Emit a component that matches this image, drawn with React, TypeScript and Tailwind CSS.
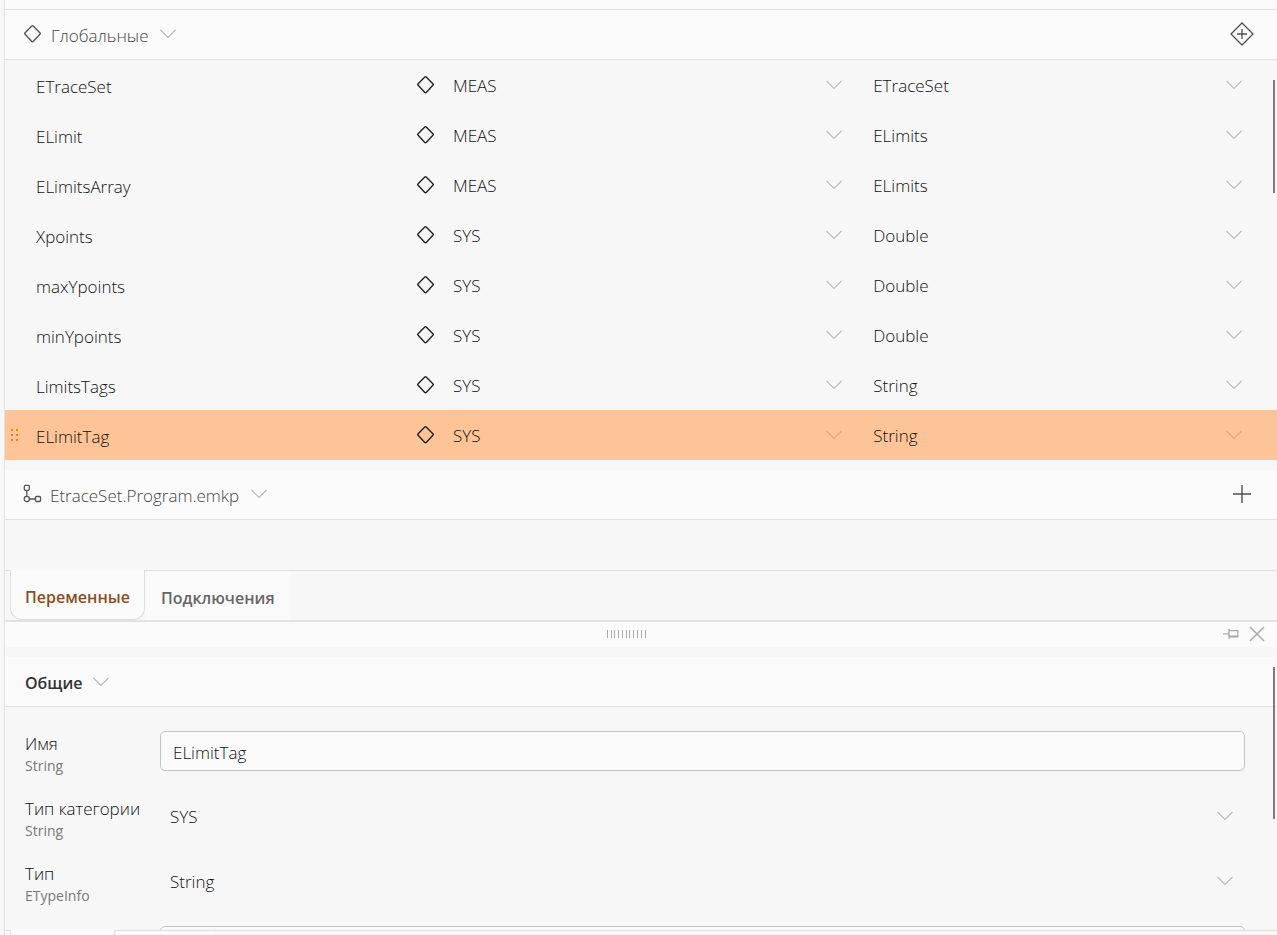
import React, { useState } from "react";

interface Variable {
  name: string;
  category: string;
  type: string;
}

const variables: Variable[] = [
  { name: "ETraceSet", category: "MEAS", type: "ETraceSet" },
  { name: "ELimit", category: "MEAS", type: "ELimits" },
  { name: "ELimitsArray", category: "MEAS", type: "ELimits" },
  { name: "Xpoints", category: "SYS", type: "Double" },
  { name: "maxYpoints", category: "SYS", type: "Double" },
  { name: "minYpoints", category: "SYS", type: "Double" },
  { name: "LimitsTags", category: "SYS", type: "String" },
  { name: "ELimitTag", category: "SYS", type: "String" },
];

const categories = ["MEAS", "SYS"];
const types = ["ETraceSet", "ELimits", "Double", "String"];

function Chevron({ className = "" }: { className?: string }) {
  return (
    <svg
      width="16"
      height="10"
      viewBox="0 0 16 10"
      fill="none"
      stroke="currentColor"
      className={`shrink-0 ${className}`}
    >
      <path d="M0.5 1L8 8.5L15.5 1" strokeWidth="1.2" />
    </svg>
  );
}

function Diamond({ className = "" }: { className?: string }) {
  return (
    <svg
      width="20"
      height="20"
      viewBox="0 0 20 20"
      fill="none"
      stroke="currentColor"
      strokeWidth="1.4"
      strokeLinejoin="round"
      className={`shrink-0 ${className}`}
    >
      <path d="M8.8 2L1.9 8.9Q1.3 9.5 1.9 10.1L8.8 17.5Q9.5 18.1 10.2 17.5L17.1 10.1Q17.7 9.5 17.1 8.9L10.2 2Q9.5 1.4 8.8 2Z" />
    </svg>
  );
}

function AddDiamond() {
  return (
    <svg width="24" height="24" viewBox="0 0 24 24" fill="none" stroke="currentColor" strokeWidth="1.3">
      <path d="M12 1L23 12L12 23L1 12Z" />
      <path d="M12 7V17M7 12H17" />
    </svg>
  );
}

function ProgramIcon() {
  return (
    <svg width="20" height="20" viewBox="0 0 20 20" fill="none" stroke="currentColor" strokeWidth="1.3" className="shrink-0">
      <rect x="2.3" y="1.3" width="5" height="5" rx="1" />
      <path d="M4.8 6.3V12.5M7.5 15H13.5" />
      <circle cx="4.8" cy="15" r="2.6" />
      <rect x="13.5" y="12.5" width="5" height="5" rx="1" />
    </svg>
  );
}

function PinIcon() {
  return (
    <svg width="16" height="10" viewBox="0 0 16 10" fill="none" stroke="currentColor">
      <path d="M0 5H6" strokeWidth="1.2" />
      <path d="M6 0V10" strokeWidth="1.4" />
      <path d="M6 1.7H14.8V7" strokeWidth="1.2" />
      <path d="M6 7.5H15.4" strokeWidth="2.2" />
    </svg>
  );
}

function Grip() {
  return (
    <svg width="40" height="8" viewBox="0 0 40 8" stroke="#a8a8a8" shapeRendering="crispEdges">
      <path d="M0.5 0V8M4.5 0V8M7.5 0V8M11.5 0V8M15.5 0V8M19.5 0V8M22.5 0V8M26.5 0V8M30.5 0V8M34.5 0V8M38.5 0V8" />
    </svg>
  );
}

function DragDots() {
  return (
    <svg width="8" height="18" viewBox="0 0 8 18" fill="#f08010">
      {[1, 6, 11].map((y) => (
        <React.Fragment key={y}>
          <rect x="1" y={y} width="2" height="2" />
          <rect x="6" y={y} width="2" height="2" />
        </React.Fragment>
      ))}
    </svg>
  );
}

type SelectProps = {
  label?: string;
  id?: string;
  value: string;
  options: string[];
  className?: string;
  chevronClass?: string;
};

function Select({ label, id, value, options, className = "", chevronClass = "text-[#bcbcbc]" }: SelectProps) {
  return (
    <div className="grid flex-1 items-center">
      <select
        id={id}
        aria-label={label}
        defaultValue={value}
        className={`col-start-1 row-start-1 h-10 w-full appearance-none bg-transparent pt-[2px] outline-none ${className}`}
      >
        {options.map((option) => (
          <option key={option}>{option}</option>
        ))}
      </select>
      <Chevron
        className={`pointer-events-none col-start-1 row-start-1 mr-3 justify-self-end ${chevronClass}`}
      />
    </div>
  );
}

type FieldProps = {
  id: string;
  title: string;
  hint: string;
  children: React.ReactNode;
};

function Field({ id, title, hint, children }: FieldProps) {
  return (
    <div className="flex h-[65px] items-start">
      <label htmlFor={id} className="w-[135px] shrink-0 pt-px">
        <span className="block leading-6">{title}</span>
        <span className="block text-sm leading-5 font-normal text-[#777]">{hint}</span>
      </label>
      {children}
    </div>
  );
}

function App() {
  const [selected, setSelected] = useState("ELimitTag");

  return (
    <div className="h-screen overflow-hidden bg-[#f7f7f7] pl-1 font-['Open_Sans','Noto_Sans',sans-serif] text-[17px] font-light text-[#111]">
      <div className="flex h-full flex-col border-l border-[#e2e2e2]">
        <div className="h-[9px] shrink-0 bg-[#fafafa]"></div>

        <header className="flex h-[51px] shrink-0 items-center justify-between border-y border-[#e0e0e0] bg-[#fbfbfb] pr-[23px] pb-px pl-[18px] text-[#555]">
          <button className="flex items-center gap-2">
            <Diamond />
            <span className="pt-[3px] text-[#444]">Глобальные</span>
            <Chevron className="ml-1 text-[#b8b8b8]" />
          </button>
          <button aria-label="Добавить переменную" className="text-[#505050]">
            <AddDiamond />
          </button>
        </header>

        <section className="relative shrink-0">
          <table className="w-full table-fixed border-collapse">
            <colgroup>
              <col className="w-[32%]" />
              <col className="w-[35%]" />
              <col />
            </colgroup>
            <tbody>
              {variables.map(({ name, category, type }) => {
                const active = name === selected;
                const chevronClass = active ? "text-[#d9a988]" : "text-[#bcbcbc]";
                return (
                  <tr
                    key={name}
                    onClick={() => setSelected(name)}
                    className={active ? "bg-[#fdc497]" : ""}
                  >
                    <td className="h-[50px] p-0">
                      <div className="flex items-center pt-1">
                        <span className="w-[31px] pl-[5px]">{active && <DragDots />}</span>
                        <span>{name}</span>
                      </div>
                    </td>
                    <td className="h-[50px] p-0 pr-[3px]">
                      <div className="flex items-center gap-2 pl-1">
                        <Diamond className="text-[#222]" />
                        <Select
                          label={`Категория ${name}`}
                          value={category}
                          options={categories}
                          className="pl-[9px]"
                          chevronClass={chevronClass}
                        />
                      </div>
                    </td>
                    <td className="h-[50px] p-0 pr-[23px]">
                      <Select
                        label={`Тип ${name}`}
                        value={type}
                        options={types}
                        className="pl-4"
                        chevronClass={chevronClass}
                      />
                    </td>
                  </tr>
                );
              })}
            </tbody>
          </table>
          <div className="absolute top-5 right-[2px] h-[113px] w-[2px] bg-[#7c7c7c]"></div>
        </section>

        <header className="mt-[10px] flex h-[50px] shrink-0 items-center justify-between border-b border-[#e0e0e0] bg-[#fbfbfb] pr-[25px] pb-px pl-[17px] text-[#555]">
          <button className="flex items-center gap-2">
            <ProgramIcon />
            <span className="pt-[3px] text-[#444]">EtraceSet.Program.emkp</span>
            <Chevron className="ml-1 text-[#b8b8b8]" />
          </button>
          <button aria-label="Добавить" className="text-[#505050]">
            <svg width="20" height="20" viewBox="0 0 20 20" stroke="currentColor" strokeWidth="1.4">
              <path d="M10 1V19M1 10H19" />
            </svg>
          </button>
        </header>

        <nav className="mt-[50px] flex h-[52px] shrink-0 border-t border-b-2 border-t-[#dedede] border-b-[#e2e2e2] pl-[5px] text-base font-semibold">
          <button className="-mt-px h-[50px] rounded-b-xl border-x border-b border-[#dedede] bg-[#fbfbfb] px-[14px] pt-1 text-[#8a4f1d]">
            Переменные
          </button>
          <button className="bg-[#fafafa] px-4 pt-1 text-[#666]">Подключения</button>
        </nav>

        <div className="flex h-[25px] shrink-0 items-center bg-[#fbfbfb] pr-3 pb-px pl-[26px]">
          <div className="flex flex-1 justify-center">
            <Grip />
          </div>
          <div className="flex items-center gap-[10px] text-[#aaa]">
            <button aria-label="Закрепить">
              <PinIcon />
            </button>
            <button aria-label="Закрыть">
              <svg width="16" height="16" viewBox="0 0 16 16" stroke="currentColor" strokeWidth="1.5">
                <path d="M1 1L15 15M15 1L1 15" />
              </svg>
            </button>
          </div>
        </div>

        <section className="relative mt-[10px] min-h-0 flex-1 overflow-hidden">
          <header className="flex h-[50px] items-center border-b border-[#e0e0e0] bg-[#fafafa] pl-5">
            <button className="flex items-center gap-[11px] text-base font-semibold text-[#333]">
              <span className="pt-[2px]">Общие</span>
              <Chevron className="text-[#b8b8b8]" />
            </button>
          </header>
          <div className="pt-6 pr-8 pl-5">
            <Field id="name" title="Имя" hint="String">
              <input
                id="name"
                defaultValue="ELimitTag"
                className="h-10 min-w-0 flex-1 rounded-[5px] border border-[#c4c4c4] bg-[#fafafa] px-3 pt-[2px] outline-none"
              />
            </Field>
            <Field id="category" title="Тип категории" hint="String">
              <Select id="category" value="SYS" options={categories} className="pl-[10px]" />
            </Field>
            <Field id="type" title="Тип" hint="ETypeInfo">
              <Select id="type" value="String" options={types} className="pl-[10px]" />
            </Field>
            <div className="flex pl-[135px]">
              <input
                aria-label="Значение"
                className="h-10 min-w-0 flex-1 rounded-[5px] border border-[#c4c4c4] bg-[#fafafa] px-3 outline-none"
              />
            </div>
          </div>
          <div className="absolute top-[10px] right-[2px] h-[152px] w-[2px] bg-[#7c7c7c]"></div>
        </section>

        <footer className="flex h-[5px] shrink-0 border-t border-[#dedede] bg-[#f7f7f7] pl-[5px]">
          <div className="-mt-px w-[105px] border-x border-[#dedede] bg-[#fbfbfb]"></div>
          <div className="w-[98px] bg-[#fafafa]"></div>
        </footer>
      </div>
    </div>
  );
}

export default App;
